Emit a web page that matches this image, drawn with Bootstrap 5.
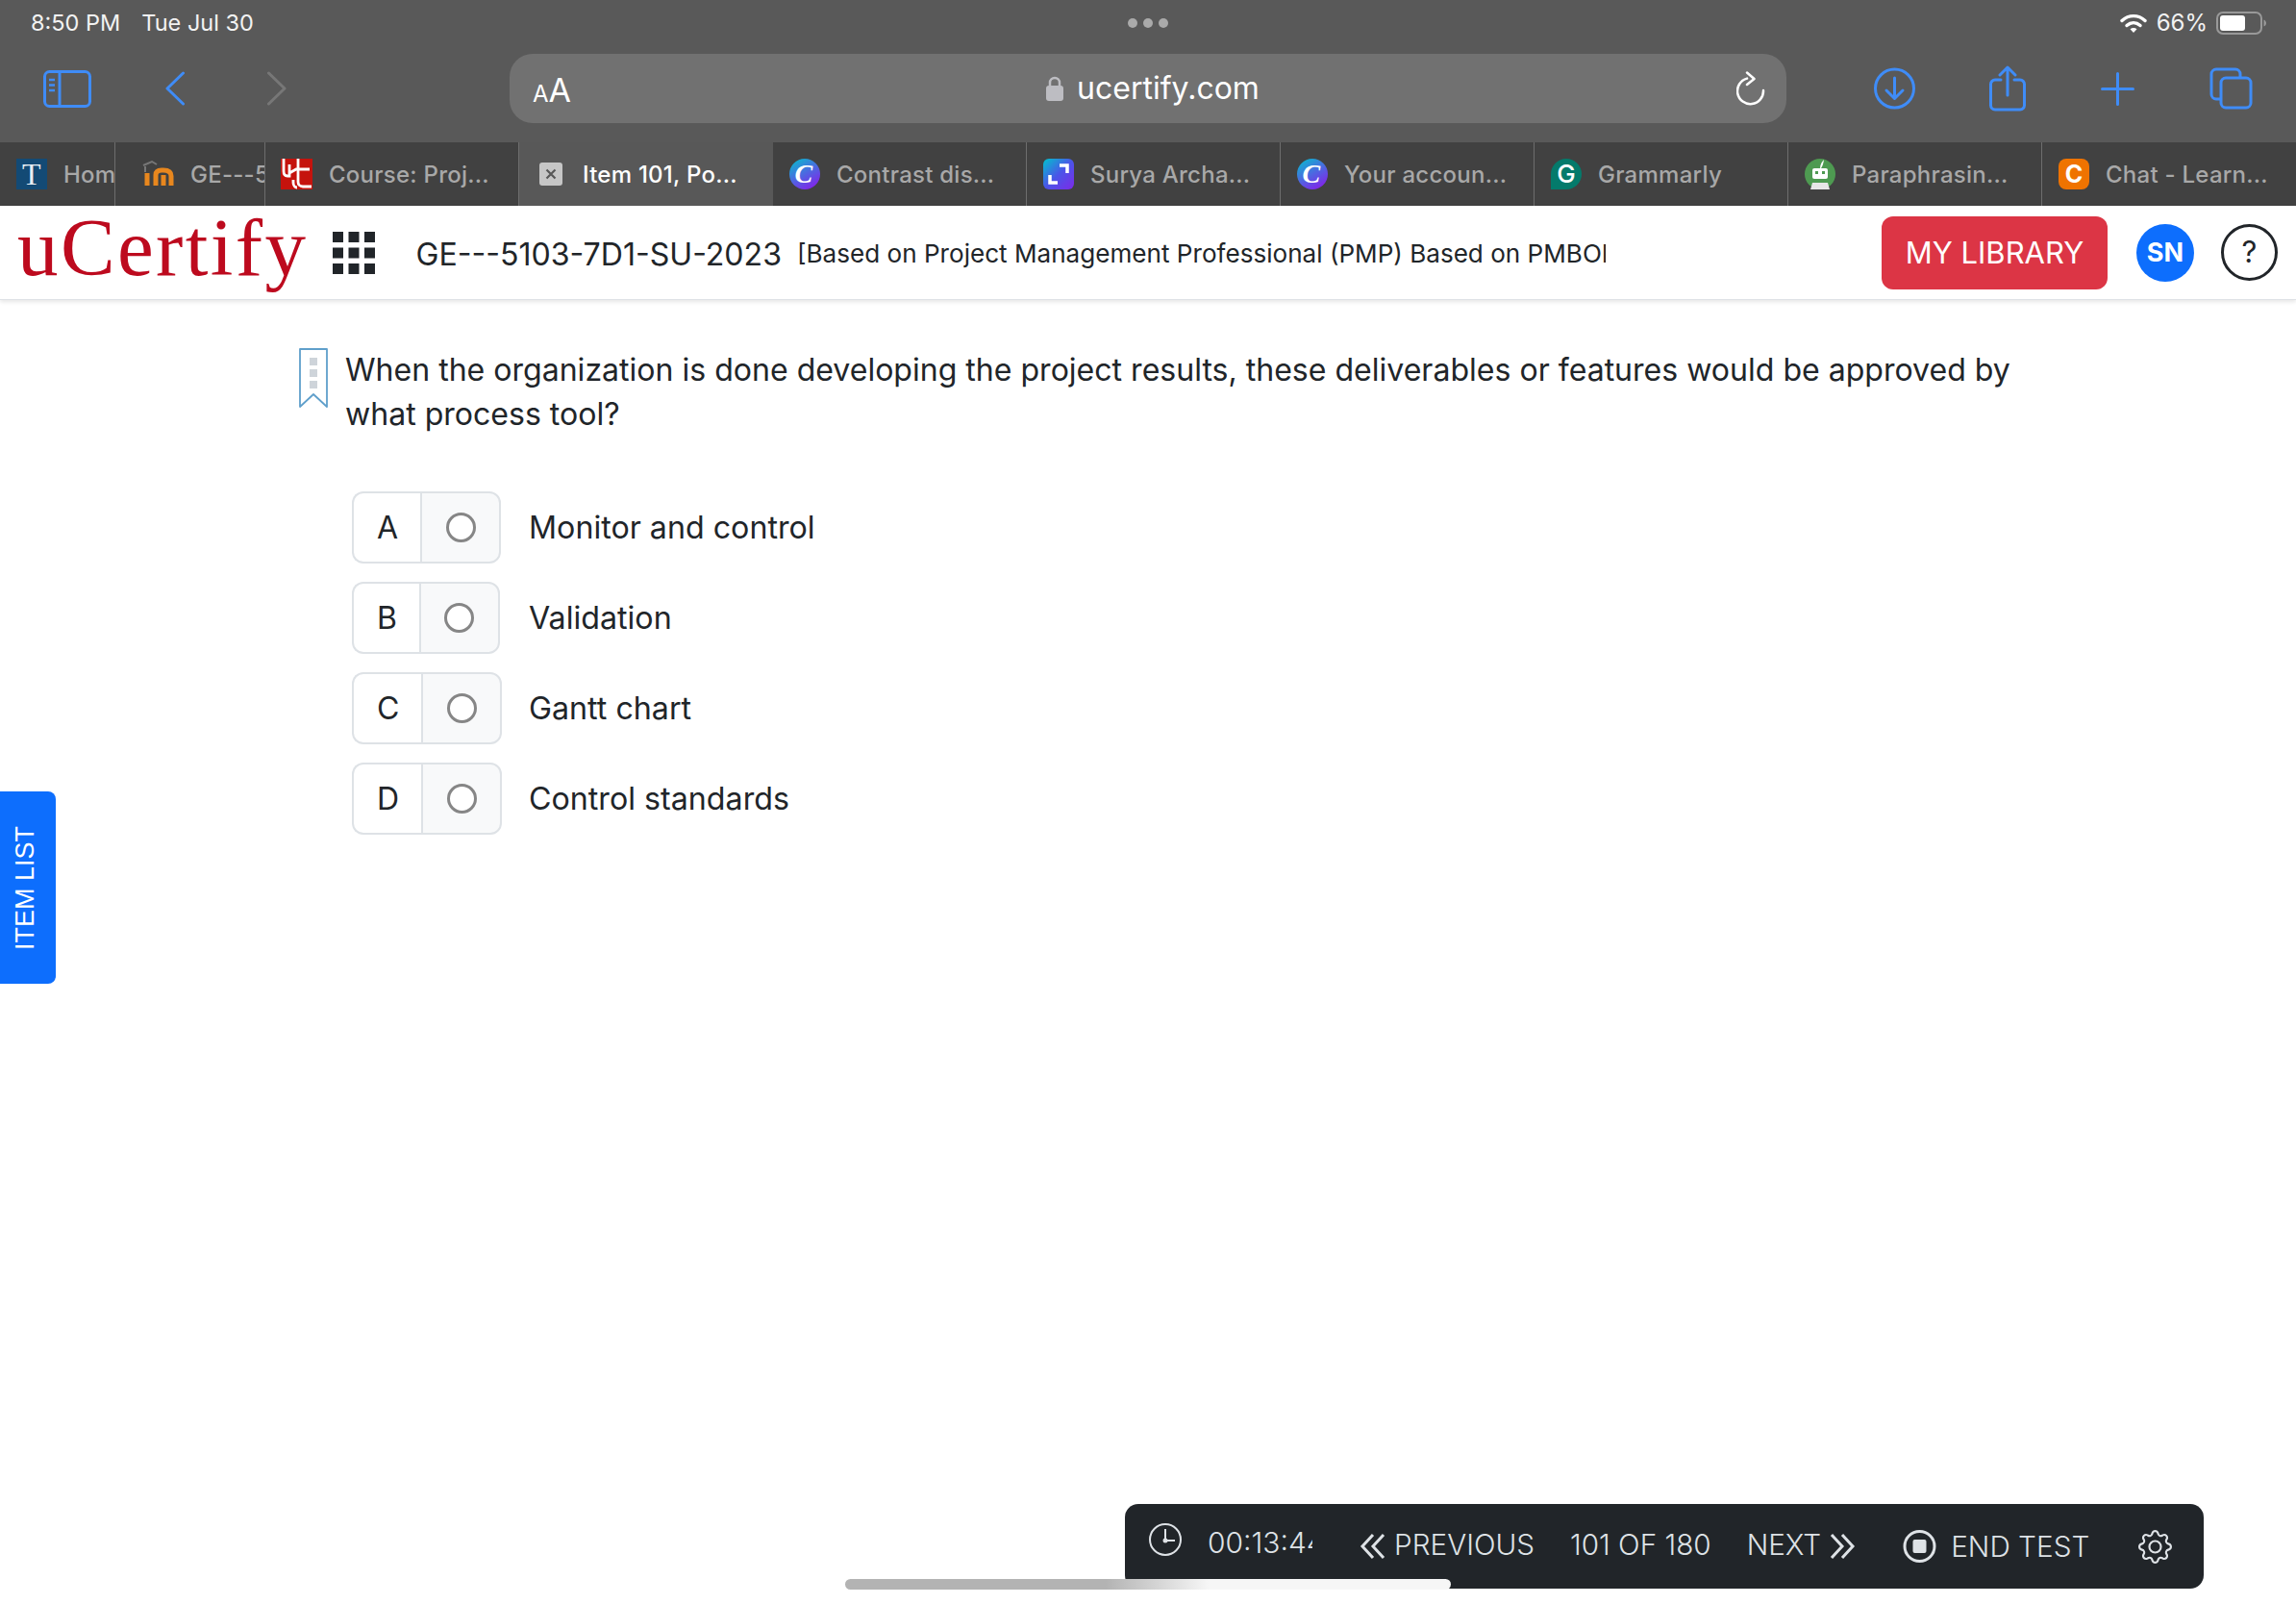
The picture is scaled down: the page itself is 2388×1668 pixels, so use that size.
<!DOCTYPE html>
<html lang="en">
<head>
  <meta charset="UTF-8" />
  <meta name="viewport" content="width=device-width, initial-scale=1.0"/>
  <title>Item 101 - uCertify</title>
  <link href="https://cdn.jsdelivr.net/npm/bootstrap@5.3.0/dist/css/bootstrap.min.css" rel="stylesheet"/>
  <style>
    html, body { height: 100%; }
    body {
      font-family: Inter, "Noto Sans", sans-serif;
      background: #fff;
      color: #212529;
      height: 1668px;
      overflow: hidden;
      position: relative;
    }
    svg { display: block; flex: none; }

    /* safari chrome */
    .safari-top { background: #595959; }
    .status-row { height: 56px; padding: 0 31px 8px 32px; color: #f2f2f2; font-size: 23.5px; position: relative; }
    .status-date { margin-left: 22px; }
    .status-dots { position: absolute; left: 1173px; top: 19px; gap: 6px; }
    .status-dots i { width: 10px; height: 10px; border-radius: 50%; background: #aaa; display: block; }
    .status-pct { margin: 0 9px 0 10px; font-size: 24px; }
    .tool-row { height: 92px; padding: 0 0 20px 45px; }
    .m-back { margin-left: 77px; }
    .m-fwd { margin-left: 86px; }
    .m-url { margin-left: 232px; }
    .m-dl { margin-left: 91px; }
    .m-share { margin-left: 77px; }
    .m-plus { margin-left: 78px; }
    .url-bar {
      width: 1328px; height: 72px; background: #717171; border-radius: 24px;
      padding: 0 22px 0 24px; color: #fff;
    }
    .aa-small { font-size: 24px; line-height: 1; }
    .aa-big { font-size: 34px; line-height: 1; }
    .aa-wrap { width: 38px; padding-top: 3px; }
    .url-host { font-size: 32px; margin-left: 14px; line-height: 1; }

    .tab-strip { height: 66px; background: #414141; }
    .tab-item {
      flex: 0 0 264px; height: 66px; padding-left: 17px; gap: 17px;
      border-right: 1px solid #6d6d6d; overflow: hidden; white-space: nowrap;
      color: #a8a8a8; font-size: 24px; font-weight: 500; letter-spacing: .25px;
    }
    .tab-item span { padding-top: 2px; }
    .tab-item:last-child { border-right: 0; flex-grow: 1; }
    .tab-home { flex-basis: 120px; }
    .tab-ge { flex-basis: 156px; padding-left: 28px; }
    .tab-course { padding-left: 16px; }
    .tab-active { background: #585858; color: #fff; border-right: 0; padding-left: 21px; gap: 21px; flex-basis: 264px; }

    /* site header */
    .site-head { height: 98px; padding: 0 19px; background: #fff; border-bottom: 1px solid #dee2e6; box-shadow: 0 2px 4px rgba(0,0,0,.1); }
    .site-logo { font-family: "Liberation Serif", serif; font-size: 85px; letter-spacing: 2.4px; line-height: 1; color: #bd0a1e; margin-top: -10px; margin-left: -1px; }
    .site-grid { margin-left: 26px; }
    .course-code { margin-left: 42px; font-size: 32.1px; white-space: nowrap; margin-top: 6px; }
    .course-name { margin-left: 16px; font-size: 26.1px; width: 841px; overflow: hidden; white-space: nowrap; margin-top: 2px; flex: none; }
    .btn-lib {
      width: 235px; height: 76px; padding: 0; font-size: 31px; border-radius: 12px;
      background: #dc3545; border: 0; color: #fff; padding-top: 2px;
    }
    .user-dot { width: 60px; height: 60px; margin-left: 30px; border-radius: 50%; background: #0d6efd; color: #fff; font-size: 27px; font-weight: 700; padding-top: 2px; }
    .help-dot { width: 59px; height: 59px; margin-left: 28px; border-radius: 50%; border: 3px solid #212529; font-size: 31px; }

    /* question */
    .q-wrap { padding: 50px 0 0 311px; }
    .q-text { margin: 0 0 0 18px; width: 1760px; font-size: 32.05px; line-height: 46px; }
    .answer-list { margin: 57px 0 0 366px; gap: 19px; }
    .answer-row { height: 75px; }
    .answer-key {
      height: 75px; padding: 0 23px 0 24px; font-size: 32px;
      border: 2px solid #dee2e6; border-right-width: 0; border-radius: 12px 0 0 12px; background: #fff;
    }
    .answer-pick {
      width: 84px; height: 75px; background: #f8f9fa;
      border: 2px solid #dee2e6; border-radius: 0 12px 12px 0;
    }
    .answer-pick .form-check-input {
      width: 31px; height: 31px; margin: 0; border: 3px solid #868686; background-color: #fff;
    }
    .answer-label { position: absolute; left: 550px; font-size: 32.2px; line-height: 75px; }

    /* overlays */
    .item-tab {
      position: absolute; left: 0; top: 823px; width: 58px; height: 200px;
      background: #0d6efd; border-radius: 8px 0 0 8px; color: #fff;
      font-family: "Liberation Sans", sans-serif; font-size: 27px;
      writing-mode: vertical-rl; transform: rotate(180deg);
      padding-left: 6px; line-height: 1;
    }
    .test-bar {
      position: absolute; left: 1170px; top: 1564px; width: 1122px; height: 88px;
      background: #212529; border-radius: 14px; color: #dee2e6; font-size: 29.7px;
      padding-left: 25px; font-weight: 300; white-space: nowrap;
    }
    .test-bar > * { flex: none; }
    .bar-clock { margin-bottom: 14px; }
    .bar-timer { width: 109px; overflow: hidden; margin-left: 27px; margin-bottom: 8px; font-size: 30px; }
    .bar-prev { margin-left: 49px; }
    .bar-gap-s { margin-left: 9px; }
    .bar-lift { margin-bottom: 3px; }
    .bar-count { margin-left: 37px; }
    .bar-next { margin-left: 37px; }
    .bar-stop { margin-left: 49px; }
    .bar-end { margin-left: 15px; }
    .bar-gear { margin-left: 51px; }
    .scroll-thumb {
      position: absolute; left: 879px; top: 1642px; width: 630px; height: 11px; border-radius: 6px;
      background: linear-gradient(90deg, #b3b3b3 0, #b3b3b3 43%, #f6f6f6 60%, #f6f6f6 100%);
    }
  </style>
</head>
<body>

<div class="safari-top">
  <div class="status-row d-flex align-items-center">
    <span>8:50 PM</span><span class="status-date">Tue Jul 30</span>
    <div class="status-dots d-flex"><i></i><i></i><i></i></div>
    <div class="ms-auto d-flex align-items-center">
      <svg width="28" height="21" viewBox="0 0 28 21" fill="none" stroke="#fff" stroke-linecap="round"><path d="M2 7.5C9 1 19 1 26 7.5" stroke-width="3.4"/><path d="M7 12.5c4.300-3.800 9.700-3.800 14 0" stroke-width="3.400"/><path d="M14 20l-3.500-3.700c2-1.700 5-1.700 7 0z" fill="#fff" stroke="none"/></svg>
      <span class="status-pct">66%</span>
      <svg width="52" height="24" viewBox="0 0 52 24" fill="none"><rect x="1" y="1" width="46" height="22" rx="6" stroke="#999" stroke-width="2"/><rect x="4" y="4" width="26" height="16" rx="3" fill="#fff"/><path d="M49.500 8.500c1.500.5 2.500 2 2.500 3.500s-1 3-2.500 3.500z" fill="#999"/></svg>
    </div>
  </div>

  <div class="tool-row d-flex align-items-center">
    <svg width="50" height="39" viewBox="0 0 50 39" fill="none" stroke="#3f8cf7" stroke-width="3"><rect x="1.500" y="1.500" width="47" height="36" rx="5"/><path d="M17 2v35"/><path d="M6 10h6M6 15.500h6M6 21h6" stroke-width="2.500"/></svg>
    <svg class="m-back" width="20" height="36" viewBox="0 0 20 36" fill="none" stroke="#3f8cf7" stroke-width="3" stroke-linecap="round" stroke-linejoin="round"><path d="M18.500 2L2 18l16.500 16"/></svg>
    <svg class="m-fwd" width="20" height="36" viewBox="0 0 20 36" fill="none" stroke="#777" stroke-width="3" stroke-linecap="round" stroke-linejoin="round"><path d="M1.500 2L18 18 1.500 34"/></svg>
    <div class="url-bar m-url d-flex align-items-center justify-content-between">
      <div class="aa-wrap d-flex align-items-baseline"><span class="aa-small">A</span><span class="aa-big">A</span></div>
      <div class="d-flex align-items-center">
        <svg width="18" height="26" viewBox="0 0 18 26" fill="#bdbdc2"><rect y="10" width="18" height="16" rx="3"/><path d="M4 11V7a5 5 0 0 1 10 0v4" fill="none" stroke="#bdbdc2" stroke-width="2.500"/></svg>
        <span class="url-host">ucertify.com</span>
      </div>
      <svg width="30" height="36" viewBox="0 0 30 36" fill="none" stroke="#fff" stroke-width="2.500" stroke-linecap="round" stroke-linejoin="round"><path d="M11 7.600A13.500 13.500 0 1 0 28 20"/><path d="M11 1.500l7.500 6.500-7.500 6"/></svg>
    </div>
    <svg class="m-dl" width="43" height="44" viewBox="0 0 43 44" fill="none" stroke="#3f8cf7" stroke-width="3" stroke-linecap="round" stroke-linejoin="round"><circle cx="21.500" cy="22" r="20"/><path d="M21.500 11v21M13 24l8.500 8.500L30 24"/></svg>
    <svg class="m-share" width="38" height="48" viewBox="0 0 38 48" fill="none" stroke="#3f8cf7" stroke-width="3" stroke-linecap="round" stroke-linejoin="round"><path d="M12 15H6a4.500 4.500 0 0 0-4.500 4.500v22A4.500 4.500 0 0 0 6 46h26a4.500 4.500 0 0 0 4.500-4.500v-22A4.500 4.500 0 0 0 32 15h-6"/><path d="M19 31V2M11 10l8-8 8 8"/></svg>
    <svg class="m-plus" width="35" height="35" viewBox="0 0 35 35" fill="none" stroke="#3f8cf7" stroke-width="3" stroke-linecap="round"><path d="M17.500 1.500v32M1.500 17.500h32"/></svg>
    <svg class="m-plus" width="45" height="44" viewBox="0 0 45 44" fill="none" stroke="#3f8cf7" stroke-width="3" stroke-linejoin="round"><path d="M11 33H7a5 5 0 0 1-5-5V7a5 5 0 0 1 5-5h20a5 5 0 0 1 5 5v3"/><rect x="12" y="11" width="31" height="31" rx="5"/></svg>
  </div>
</div>

<div class="tab-strip d-flex">
  <div class="tab-item tab-home d-flex align-items-center">
    <svg width="32" height="32" viewBox="0 0 32 32"><rect width="32" height="32" fill="#134a75"/><text x="16" y="27" text-anchor="middle" font-family="Liberation Serif, serif" font-size="32" fill="#e8edf2">T</text></svg>
    <span>Home</span>
  </div>
  <div class="tab-item tab-ge d-flex align-items-center">
    <svg width="33" height="32" viewBox="0 0 33 32" fill="none"><path d="M1 7l9-4 5 3" stroke="#777" stroke-width="2"/><path d="M3 8v6" stroke="#777" stroke-width="2"/><path d="M5 28V15M14 28V17c0-3 2-5 6-5h2c5 0 8 2 8 6v10M22 28V17" stroke="#e8871e" stroke-width="5"/></svg>
    <span>GE---5103-7D1</span>
  </div>
  <div class="tab-item tab-course d-flex align-items-center">
    <svg width="33" height="32" viewBox="0 0 33 32"><rect width="33" height="32" fill="#c5130d"/><path d="M3 0v13c0 3 1 5 4 5h2V6M9 15l7-4h14M18 0v24c0 3 2 5 5 5h9M13 22v3c0 3 2 5 4 5" fill="none" stroke="#fff" stroke-width="2.800"/></svg>
    <span>Course: Proj...</span>
  </div>
  <div class="tab-item tab-active d-flex align-items-center">
    <svg width="24" height="24" viewBox="0 0 24 24"><rect width="24" height="24" rx="3" fill="#c6c6c6"/><path d="M7.500 7.500l9 9M16.500 7.500l-9 9" stroke="#585858" stroke-width="2.200"/></svg>
    <span>Item 101, Po...</span>
  </div>
  <div class="tab-item d-flex align-items-center">
    <svg width="32" height="32" viewBox="0 0 32 32"><defs><linearGradient id="canvaA" x1="0" y1="0" x2=".6" y2="1"><stop offset="0" stop-color="#00c4cc"/><stop offset=".55" stop-color="#4a6be0"/><stop offset="1" stop-color="#7d2ae8"/></linearGradient></defs><ellipse cx="16" cy="16" rx="16" ry="16" fill="url(#canvaA)"/><text x="15" y="25" text-anchor="middle" font-family="Liberation Serif, serif" font-style="italic" font-weight="700" font-size="28" fill="#fff">C</text></svg>
    <span>Contrast dis...</span>
  </div>
  <div class="tab-item d-flex align-items-center">
    <svg width="32" height="32" viewBox="0 0 32 32"><defs><linearGradient id="suryaA" x1="0" y1="0" x2="1" y2="1"><stop offset="0" stop-color="#00c4cc"/><stop offset=".5" stop-color="#4a55e8"/><stop offset="1" stop-color="#7d2ae8"/></linearGradient></defs><rect width="32" height="32" rx="6" fill="url(#suryaA)"/><path d="M17 7h8v8M15 25H7v-8" fill="none" stroke="#fff" stroke-width="3.500"/></svg>
    <span>Surya Archa...</span>
  </div>
  <div class="tab-item d-flex align-items-center">
    <svg width="32" height="32" viewBox="0 0 32 32"><ellipse cx="16" cy="16" rx="16" ry="16" fill="url(#canvaA)"/><text x="15" y="25" text-anchor="middle" font-family="Liberation Serif, serif" font-style="italic" font-weight="700" font-size="28" fill="#fff">C</text></svg>
    <span>Your accoun...</span>
  </div>
  <div class="tab-item d-flex align-items-center">
    <svg width="32" height="32" viewBox="0 0 32 32"><path d="M16 0a16 16 0 0 1 0 32H0V16A16 16 0 0 1 16 0z" fill="#047a6b"/><text x="16" y="25" text-anchor="middle" font-family="Inter, sans-serif" font-weight="500" font-size="26" fill="#fff">G</text></svg>
    <span>Grammarly</span>
  </div>
  <div class="tab-item d-flex align-items-center">
    <svg width="32" height="32" viewBox="0 0 32 32"><circle cx="16" cy="16" r="16" fill="#4e9a51"/><path d="M16 10c0-4 2-7 4-9-.5 4-1.500 7-3 9z" fill="#fff"/><rect x="8" y="10" width="16" height="11" rx="2" fill="#fff"/><rect x="11" y="13" width="3" height="3" fill="#4e9a51"/><rect x="18" y="13" width="3" height="3" fill="#4e9a51"/><path d="M6 32a16 16 0 0 0 20 0l-2-7H8z" fill="#e6e6e6"/></svg>
    <span>Paraphrasin...</span>
  </div>
  <div class="tab-item d-flex align-items-center">
    <svg width="32" height="32" viewBox="0 0 32 32"><rect width="32" height="32" rx="8" fill="#ef7300"/><text x="16" y="25" text-anchor="middle" font-family="Inter, sans-serif" font-weight="700" font-size="25" fill="#fff">C</text></svg>
    <span>Chat - Learn...</span>
  </div>
</div>

<header class="site-head d-flex align-items-center">
  <span class="site-logo">uCertify</span>
  <svg class="site-grid" width="44" height="44" viewBox="0 0 44 44" fill="#212529"><rect width="11" height="11"/><rect x="16.500" width="11" height="11"/><rect x="33" width="11" height="11"/><rect y="16.500" width="11" height="11"/><rect x="16.500" y="16.500" width="11" height="11"/><rect x="33" y="16.500" width="11" height="11"/><rect y="33" width="11" height="11"/><rect x="16.500" y="33" width="11" height="11"/><rect x="33" y="33" width="11" height="11"/></svg>
  <span class="course-code">GE---5103-7D1-SU-2023</span>
  <span class="course-name">[Based on Project Management Professional (PMP) Based on PMBOK Guide]</span>
  <button type="button" class="btn btn-lib ms-auto">MY LIBRARY</button>
  <div class="user-dot d-flex align-items-center justify-content-center">SN</div>
  <div class="help-dot d-flex align-items-center justify-content-center">?</div>
</header>

<main>
  <div class="q-wrap d-flex">
    <svg width="30" height="62" viewBox="0 0 30 62" fill="none"><path d="M1 1h28v60L15 48 1 61z" stroke="#5f9fcb" stroke-width="1.800" stroke-linejoin="round"/><rect x="11" y="10" width="8" height="8" fill="#ced4da"/><rect x="11" y="22" width="8" height="8" fill="#ced4da"/><rect x="11" y="34" width="8" height="8" fill="#ced4da"/></svg>
    <p class="q-text">When the organization is done developing the project results, these deliverables or features would be approved by what process tool?</p>
  </div>

  <div class="answer-list d-flex flex-column"></div>
</main>

<div class="item-tab d-flex align-items-center justify-content-center">ITEM LIST</div>

<div class="test-bar d-flex align-items-center">
  <svg class="bar-clock" width="34" height="34" viewBox="0 0 34 34" fill="none" stroke="#dee2e6" stroke-width="2"><circle cx="17" cy="17" r="16"/><path d="M17 6v12h10"/><circle cx="17" cy="18" r="2.500" fill="#dee2e6" stroke="none"/></svg>
  <div class="bar-timer">00:13:44</div>
  <svg class="bar-prev" width="27" height="28" viewBox="0 0 27 28" fill="none" stroke="#dee2e6" stroke-width="3"><path d="M14 2L3 14l11 12M25 2L14 14l11 12"/></svg>
  <span class="bar-gap-s bar-lift">PREVIOUS</span>
  <span class="bar-count bar-lift">101 OF 180</span>
  <span class="bar-next bar-lift">NEXT</span>
  <svg class="bar-gap-s" width="27" height="28" viewBox="0 0 27 28" fill="none" stroke="#dee2e6" stroke-width="3"><path d="M2 2l11 12L2 26M13 2l11 12-11 12"/></svg>
  <svg class="bar-stop" width="35" height="34" viewBox="0 0 35 34" fill="none"><circle cx="17.500" cy="17" r="15.500" stroke="#dee2e6" stroke-width="3"/><rect x="10.500" y="10" width="14" height="14" rx="2" fill="#dee2e6"/></svg>
  <span class="bar-end">END TEST</span>
  <svg class="bar-gear" width="35" height="35" viewBox="0 0 16 16" fill="#dee2e6"><path d="M8 4.754a3.246 3.246 0 1 0 0 6.492 3.246 3.246 0 0 0 0-6.492zM5.754 8a2.246 2.246 0 1 1 4.492 0 2.246 2.246 0 0 1-4.492 0z"/><path d="M9.796 1.343c-.527-1.790-3.065-1.790-3.592 0l-.094.319a.873.873 0 0 1-1.255.52l-.292-.16c-1.640-.892-3.433.902-2.540 2.541l.159.292a.873.873 0 0 1-.52 1.255l-.319.094c-1.790.527-1.790 3.065 0 3.592l.319.094a.873.873 0 0 1 .52 1.255l-.16.292c-.892 1.640.901 3.434 2.541 2.540l.292-.159a.873.873 0 0 1 1.255.52l.094.319c.527 1.790 3.065 1.790 3.592 0l.094-.319a.873.873 0 0 1 1.255-.52l.292.16c1.640.893 3.434-.902 2.540-2.541l-.159-.292a.873.873 0 0 1 .52-1.255l.319-.094c1.790-.527 1.790-3.065 0-3.592l-.319-.094a.873.873 0 0 1-.52-1.255l.16-.292c.893-1.640-.902-3.433-2.541-2.540l-.292.159a.873.873 0 0 1-1.255-.52l-.094-.319zm-2.633.283c.246-.835 1.428-.835 1.674 0l.094.319a1.873 1.873 0 0 0 2.693 1.115l.291-.16c.764-.415 1.600.42 1.184 1.185l-.159.292a1.873 1.873 0 0 0 1.116 2.692l.318.094c.835.246.835 1.428 0 1.674l-.319.094a1.873 1.873 0 0 0-1.115 2.693l.16.291c.415.764-.42 1.600-1.185 1.184l-.291-.159a1.873 1.873 0 0 0-2.693 1.116l-.094.318c-.246.835-1.428.835-1.674 0l-.094-.319a1.873 1.873 0 0 0-2.692-1.115l-.292.16c-.764.415-1.600-.42-1.184-1.185l.159-.291A1.873 1.873 0 0 0 1.945 8.930l-.319-.094c-.835-.246-.835-1.428 0-1.674l.319-.094A1.873 1.873 0 0 0 3.060 4.377l-.16-.292c-.415-.764.42-1.600 1.185-1.184l.292.159a1.873 1.873 0 0 0 2.692-1.115l.094-.319z"/></svg>
</div>
<div class="scroll-thumb"></div>

<script>
  // answer rows are the same markup four times
  const answers = [['A', 'Monitor and control'], ['B', 'Validation'], ['C', 'Gantt chart'], ['D', 'Control standards']];
  document.querySelector('.answer-list').innerHTML = answers.map(a => `
    <div class="answer-row d-flex align-items-center">
      <div class="answer-key d-flex align-items-center">${a[0]}</div>
      <div class="answer-pick d-flex align-items-center justify-content-center">
        <input class="form-check-input" type="radio" name="answer" aria-label="${a[0]}">
      </div>
      <span class="answer-label">${a[1]}</span>
    </div>`).join('');
</script>

</body>
</html>
